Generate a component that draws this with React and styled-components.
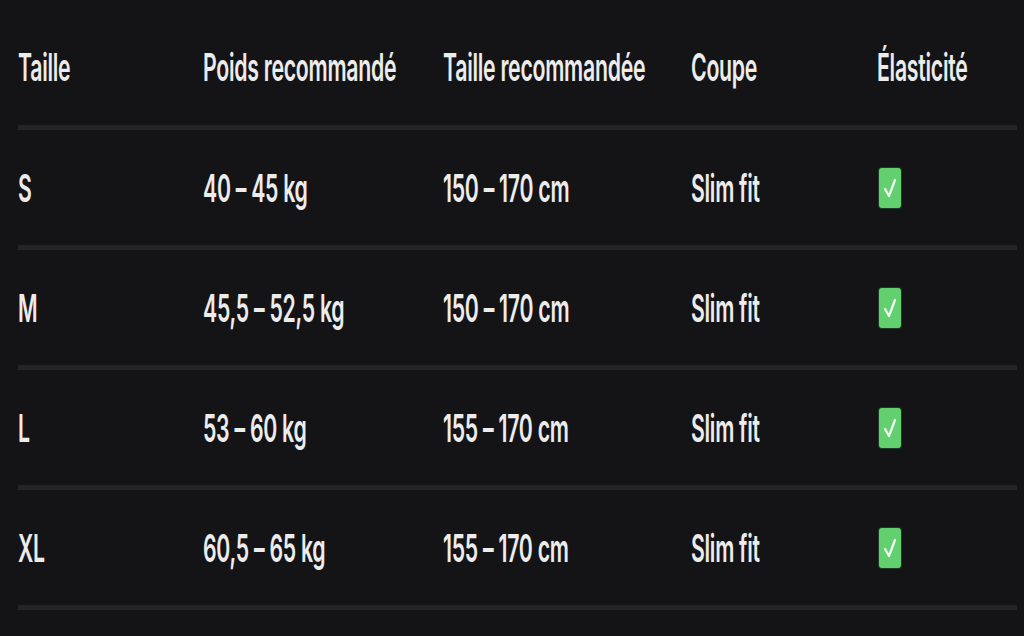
import React from "react";
import styled, { createGlobalStyle } from "styled-components";

const GlobalStyle = createGlobalStyle`
  html, body {
    margin: 0;
    padding: 0;
    background: #141416;
  }
  body {
    font-family: Inter, "Noto Sans", sans-serif;
    color: #ececec;
  }
`;

const rows = [
  { size: "S", weight: "40 – 45 kg", height: "150 – 170 cm", fit: "Slim fit" },
  { size: "M", weight: "45,5 – 52,5 kg", height: "150 – 170 cm", fit: "Slim fit" },
  { size: "L", weight: "53 – 60 kg", height: "155 – 170 cm", fit: "Slim fit" },
  { size: "XL", weight: "60,5 – 65 kg", height: "155 – 170 cm", fit: "Slim fit" },
];

export default function App() {
  return (
    <>
      <GlobalStyle />
      <Table>
        <HeadRow>
          <Cell><Txt>Taille</Txt></Cell>
          <Cell><Txt>Poids recommandé</Txt></Cell>
          <Cell><Txt>Taille recommandée</Txt></Cell>
          <Cell><Txt>Coupe</Txt></Cell>
          <Cell><Txt>Élasticité</Txt></Cell>
        </HeadRow>
        {rows.map((r) => (
          <Row key={r.size}>
            <Cell><Txt>{r.size}</Txt></Cell>
            <Cell><Txt>{r.weight}</Txt></Cell>
            <Cell><Txt>{r.height}</Txt></Cell>
            <Cell><Txt>{r.fit}</Txt></Cell>
            <Cell>
              <Check>
                <svg viewBox="0 0 22 40" width="22" height="40" preserveAspectRatio="none">
                  <path d="M6 21 L10 28 L16 12" fill="none" stroke="#f4fff4" strokeWidth="2.2" strokeLinecap="round" strokeLinejoin="round" />
                </svg>
              </Check>
            </Cell>
          </Row>
        ))}
      </Table>
    </>
  );
}

const Table = styled.div`
  width: 1024px;
  height: 636px;
  padding: 0 7px 0 18px;
  box-sizing: border-box;
  overflow: hidden;
`;

const HeadRow = styled.div`
  display: grid;
  grid-template-columns: 185px 240px 248px 186px 1fr;
  align-items: center;
  height: 130px;
  padding-top: 8px;
  box-sizing: border-box;
  border-bottom: 5px solid #252527;
`;

const Row = styled(HeadRow)`
  height: 120px;
  padding-top: 0;
`;

const Cell = styled.div`
  display: flex;
  align-items: center;
  height: 44px;
  white-space: nowrap;
`;

const Txt = styled.span`
  display: inline-block;
  font-size: 38px;
  font-weight: 600;
  line-height: 44px;
  letter-spacing: -0.5px;
  transform: scaleX(0.56);
  transform-origin: left center;
`;

const Check = styled.div`
  width: 22px;
  height: 40px;
  margin-left: 2px;
  background: #62d06f;
  border-radius: 3px;
  box-shadow: 0 0 0 1px #1e3a25;
  svg {
    display: block;
  }
`;
